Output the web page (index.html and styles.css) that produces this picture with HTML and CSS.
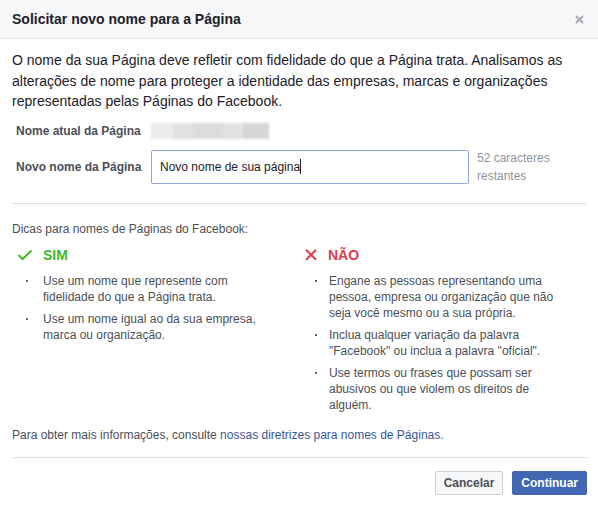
FILE: index.html
```html
<!DOCTYPE html>
<html>
<head>
<meta http-equiv="Content-Type" content="text/html; charset=utf-8"/>
<title>Solicitar novo nome para a Página</title>
<link rel="stylesheet" href="styles.css">
</head>
<body>
<div class="dialog">
  <div class="dialog-header">
    <h3 class="dialog-title">Solicitar novo nome para a Página</h3>
    <a class="dialog-close" href="#" title="Fechar">
      <svg width="9" height="9" viewBox="0 0 9 9"><path d="M1 1L8 8M8 1L1 8" stroke="#a6a7ab" stroke-width="1.8" fill="none"/></svg>
    </a>
  </div>

  <div class="dialog-body">
    <p class="intro">O nome da sua Página deve refletir com fidelidade do que a Página trata. Analisamos as alterações de nome para proteger a identidade das empresas, marcas e organizações representadas pelas Páginas do Facebook.</p>

    <div class="name-form">
      <div class="form-row">
        <div class="form-label">Nome atual da Página</div>
        <div class="current-name">
          <span class="blur-a"></span><span class="blur-b"></span><span class="blur-c"></span><span class="blur-b"></span><span class="blur-d"></span>
        </div>
      </div>
      <div class="form-row">
        <div class="form-label">Novo nome da Página</div>
        <div class="name-input">Novo nome de sua página<span class="caret"></span></div>
        <div class="char-count">52 caracteres<br>restantes</div>
      </div>
    </div>

    <div class="tips">
      <div class="tips-title">Dicas para nomes de Páginas do Facebook:</div>
      <div class="tips-cols">
        <div class="tips-col">
          <div class="tips-head tips-yes">
            <svg class="tips-icon" width="16" height="12" viewBox="0 0 16 12"><path d="M1.5 6L5.5 10L14.5 1.5" stroke="#42b72a" stroke-width="2" fill="none"/></svg>
            SIM
          </div>
          <ul class="tips-list">
            <li>Use um nome que represente com fidelidade do que a Página trata.</li>
            <li>Use um nome igual ao da sua empresa, marca ou organização.</li>
          </ul>
        </div>
        <div class="tips-col">
          <div class="tips-head tips-no">
            <svg class="tips-icon" width="16" height="12" viewBox="0 0 16 12"><path d="M1 0.8L11 10.8M11 0.8L1 10.8" stroke="#dd3c4c" stroke-width="2" fill="none"/></svg>
            NÃO
          </div>
          <ul class="tips-list">
            <li>Engane as pessoas representando uma pessoa, empresa ou organização que não seja você mesmo ou a sua própria.</li>
            <li>Inclua qualquer variação da palavra "Facebook" ou inclua a palavra "oficial".</li>
            <li>Use termos ou frases que possam ser abusivos ou que violem os direitos de alguém.</li>
          </ul>
        </div>
      </div>
    </div>

    <p class="more-info">Para obter mais informações, consulte <a href="#">nossas diretrizes para nomes de Páginas</a>.</p>
  </div>

  <div class="dialog-footer">
    <a class="btn btn-default" href="#">Cancelar</a>
    <a class="btn btn-primary" href="#">Continuar</a>
  </div>
</div>
</body>
</html>
```

FILE: styles.css
```css
body {
  margin: 0;
  font-family: "Liberation Sans", Arial, Helvetica, sans-serif;
  background-color: white;
  color: #1d2129;
}

.dialog {
  width: 598px;
}

/* header */
.dialog-header {
  display: flex;
  align-items: center;
  justify-content: space-between;
  height: 38px;
  padding: 0 12px;
  background-color: #f6f7f9;
  border-bottom: 1px solid #e5e5e5;
}

.dialog-title {
  margin: 0;
  font-size: 14px;
  font-weight: bold;
  color: #1d2129;
}

.dialog-close {
  display: flex;
  margin-right: 2px;
}

/* body */
.dialog-body {
  margin: 0 12px;
  padding-top: 11px;
}

.intro {
  margin: 0;
  font-size: 14px;
  line-height: 20.5px;
}

.name-form {
  padding: 11px 0 18px;
  border-bottom: 1px solid #dddfe2;
}

.form-row {
  display: flex;
  align-items: center;
  margin-top: 10px;
}

.form-row:first-child {
  margin-top: 0;
}

.form-label {
  width: 135px;
  padding-left: 4px;
  font-size: 12px;
  font-weight: bold;
  color: #4b4f56;
}

.current-name {
  display: flex;
  width: 118px;
  height: 16px;
  filter: blur(1.2px);
}

.current-name span {
  height: 16px;
}

.blur-a { width: 22px; background: #ececed; }
.blur-b { width: 20px; background: #e2e2e4; }
.blur-c { width: 30px; background: #dcdcde; }
.blur-d { width: 26px; background: #d6d6d8; }

.name-input {
  display: flex;
  align-items: center;
  width: 300px;
  height: 32px;
  padding: 0 8px;
  border: 1px solid #92a8d6;
  border-radius: 2px;
  font-size: 12px;
  color: #1d2129;
}

.caret {
  display: inline-block;
  width: 1px;
  height: 15px;
  background: #1d2129;
}

.char-count {
  margin-left: 8px;
  font-size: 12px;
  line-height: 18px;
  color: #90949c;
}

/* tips */
.tips {
  padding-top: 17px;
}

.tips-title {
  font-size: 12px;
  line-height: 16px;
  color: #4b4f56;
}

.tips-cols {
  display: grid;
  grid-template-columns: 1fr 1fr;
  margin-top: 9px;
}

.tips-head {
  display: flex;
  align-items: center;
  height: 18px;
  padding-left: 5px;
  font-size: 14px;
  font-weight: bold;
}

.tips-icon {
  margin-right: 10px;
}

.tips-yes {
  color: #42b72a;
}

.tips-no {
  color: #dd3c4c;
}

.tips-no .tips-icon {
  margin-left: 1px;
  margin-right: 7px;
}

.tips-list {
  margin: 9px 0 0;
  padding: 0;
  list-style: none;
}

.tips-list li {
  display: flex;
  margin-bottom: 6px;
  padding-right: 20px;
  font-size: 12px;
  line-height: 16px;
  color: #4b4f56;
}

.tips-list li::before {
  content: "";
  flex-shrink: 0;
  width: 2px;
  height: 2px;
  margin: 7px 15px 0 14px;
  background: #616770;
}

.tips-no + .tips-list li::before {
  margin-left: 16px;
  margin-right: 12px;
}

.more-info {
  margin: 8px 0 0;
  padding-bottom: 14px;
  font-size: 12px;
  line-height: 16px;
  color: #4b4f56;
}

.more-info a {
  color: #365899;
  text-decoration: none;
}

/* footer */
.dialog-footer {
  display: flex;
  justify-content: flex-end;
  gap: 9px;
  margin: 0 11px 0 12px;
  padding: 13px 0;
  border-top: 1px solid #dddfe2;
}

.btn {
  display: inline-block;
  height: 22px;
  padding: 0 8px;
  border: 1px solid;
  border-radius: 2px;
  font-size: 12px;
  font-weight: bold;
  line-height: 22px;
  text-decoration: none;
}

.btn-default {
  background-color: #f6f7f9;
  border-color: #ced0d4;
  color: #4b4f56;
}

.btn-primary {
  background-color: #4267b2;
  border-color: #4267b2;
  color: white;
}
```
